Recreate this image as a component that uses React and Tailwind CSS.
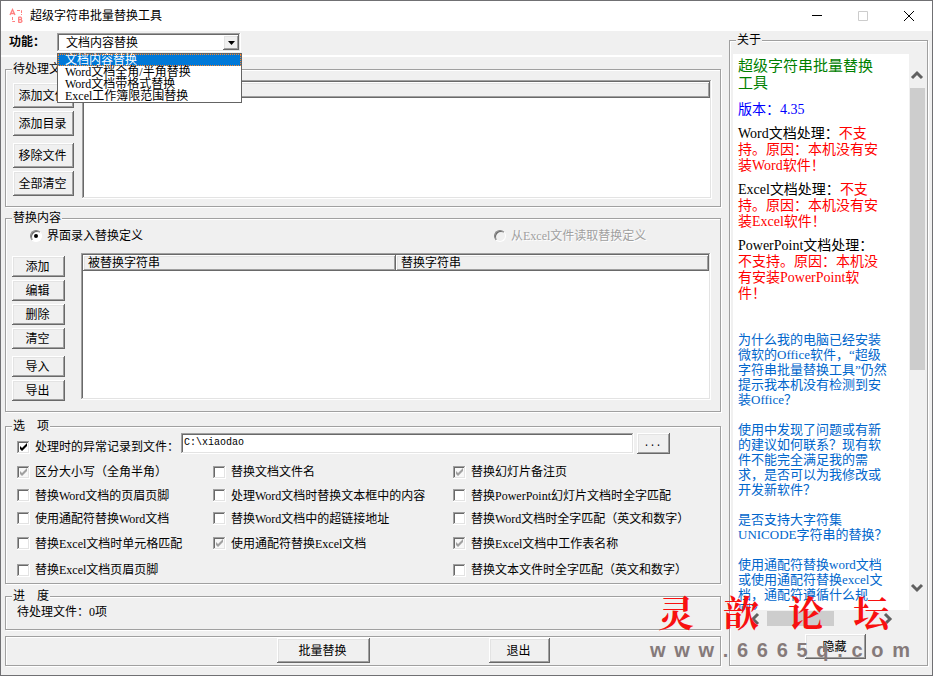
import { useState } from 'react'

const MODES = ['文档内容替换', 'Word文档全角/半角替换', 'Word文档带格式替换', 'Excel工作簿限范围替换']

const OPTIONS = [
  { id: 'case', text: '区分大小写（全角半角）', checked: true, disabled: true },
  { id: 'fileName', text: '替换文档文件名' },
  { id: 'notes', text: '替换幻灯片备注页', checked: true, disabled: true },
  { id: 'wordHeader', text: '替换Word文档的页眉页脚' },
  { id: 'wordBox', text: '处理Word文档时替换文本框中的内容' },
  { id: 'pptWhole', text: '替换PowerPoint幻灯片文档时全字匹配' },
  { id: 'wordWild', text: '使用通配符替换Word文档' },
  { id: 'wordLink', text: '替换Word文档中的超链接地址' },
  { id: 'wordWhole', text: '替换Word文档时全字匹配（英文和数字）' },
  { id: 'excelCell', text: '替换Excel文档时单元格匹配' },
  { id: 'excelWild', text: '使用通配符替换Excel文档', checked: true, disabled: true },
  { id: 'excelSheet', text: '替换Excel文档中工作表名称', checked: true, disabled: true },
  { id: 'excelHeader', text: '替换Excel文档页眉页脚' },
  null,
  { id: 'txtWhole', text: '替换文本文件时全字匹配（英文和数字）' },
]

const QUESTIONS = [
  ['为什么我的电脑已经安装', '微软的Office软件，“超级', '字符串批量替换工具”仍然', '提示我本机没有检测到安', '装Office？'],
  ['使用中发现了问题或有新', '的建议如何联系？现有软', '件不能完全满足我的需', '求，是否可以为我修改或', '开发新软件？'],
  ['是否支持大字符集', 'UNICODE字符串的替换？'],
  ['使用通配符替换word文档', '或使用通配符替换excel文', '档，通配符遵循什么规', '则？'],
]

const raised =
  'bg-[#f0f0f0] shadow-[inset_-1px_-1px_0_#696969,inset_1px_1px_0_#fff,inset_-2px_-2px_0_#a0a0a0,inset_2px_2px_0_#e3e3e3]'
const sunken =
  'bg-white shadow-[inset_-1px_-1px_0_#fff,inset_1px_1px_0_#a0a0a0,inset_-2px_-2px_0_#e3e3e3,inset_2px_2px_0_#696969]'
const etched = 'border border-[#a0a0a0] shadow-[1px_1px_0_#fff,inset_1px_1px_0_#fff]'

function Button({ className = '', children }) {
  return (
    <button type="button" className={`${raised} flex items-center justify-center pr-[2px] ${className}`}>
      {children}
    </button>
  )
}

function Group({ title, className = '', children }) {
  return (
    <fieldset className={`${etched} min-w-0 ${className}`}>
      <legend className="ml-[6px] h-[13px] bg-[#f0f0f0] px-px leading-[13px] whitespace-pre">{title}</legend>
      {children}
    </fieldset>
  )
}

function Check({ id, text, checked, disabled, onChange }) {
  return (
    <div className="flex items-center gap-[5px]">
      <span className="relative flex">
        <input
          id={id}
          type="checkbox"
          checked={checked}
          disabled={disabled}
          onChange={onChange}
          className={`${sunken} size-[13px] appearance-none disabled:bg-[#f7f7f7]`}
        />
        {checked && (
          <svg viewBox="0 0 13 13" className="pointer-events-none absolute inset-0 size-[13px]">
            <path d="M3 5v3l2 2 5-5V2L5 7z" fill={disabled ? '#a0a0a0' : '#000'} />
          </svg>
        )}
      </span>
      <label htmlFor={id} className="whitespace-nowrap">
        {text}
      </label>
    </div>
  )
}

function Radio({ id, text, checked, disabled, onChange }) {
  return (
    <div className="flex items-center gap-[5px]">
      <span className="relative flex">
        <input
          id={id}
          type="radio"
          name="source"
          checked={checked}
          disabled={disabled}
          onChange={onChange}
          className="size-[12px] appearance-none rounded-full border border-t-[#808080] border-r-white border-b-white border-l-[#808080] bg-white shadow-[inset_1px_1px_0_#696969] disabled:bg-[#f0f0f0]"
        />
        {checked && <span className="pointer-events-none absolute inset-1 rounded-full bg-black" />}
      </span>
      <label htmlFor={id} className={disabled ? 'text-[#a0a0a0] [text-shadow:1px_1px_0_#fff]' : ''}>
        {text}
      </label>
    </div>
  )
}

function Arrow({ d }) {
  return (
    <svg viewBox="0 0 16 16" className="size-4 shrink-0" fill="none" stroke="#606060" strokeWidth="3">
      <path d={d} />
    </svg>
  )
}

function Support({ name, children }) {
  return (
    <p className="mb-2 text-[14px] leading-4 text-[#ff0000]">
      <span className="text-black">{name}文档处理：</span>
      {children}
    </p>
  )
}

function TitleBar() {
  return (
    <header className="flex h-[30px] items-center bg-white pl-2">
      <svg viewBox="0 0 16 16" className="size-4" fill="none" stroke="#ff7f7f">
        <path d="M1 7 3.500 1.500 6 7M2 5.500h3" strokeWidth="1.300" />
        <path d="M8 2.500h4.500V7M3.500 9v4.500H7" strokeDasharray="3 1" />
        <path d="M9.700 9v5.500M9.500 9.200h2.300q1.500 1.200 0 2.500H9.500M12 11.700q2 1.300 0 2.600H9.500" strokeWidth="1.300" />
      </svg>
      <h1 className="ml-[5px] flex-1">超级字符串批量替换工具</h1>
      <button type="button" aria-label="最小化" className="flex w-[46px] justify-center">
        <svg viewBox="0 0 10 10" className="size-[10px]" stroke="#000">
          <path d="M0 4.500h10" />
        </svg>
      </button>
      <button type="button" aria-label="最大化" disabled className="flex w-[46px] justify-center">
        <svg viewBox="0 0 10 10" className="size-[10px]" fill="none" stroke="#ccc">
          <path d="M.5.500h9v9h-9z" />
        </svg>
      </button>
      <button type="button" aria-label="关闭" className="flex w-[46px] justify-center">
        <svg viewBox="0 0 10 10" className="size-[10px]" stroke="#000">
          <path d="M0 0l10 10M10 0 0 10" />
        </svg>
      </button>
    </header>
  )
}

function ModePicker() {
  const [mode, setMode] = useState(0)
  return (
    <div className="flex h-[26px] items-start border-b-2 border-white pt-[2px] pl-2">
      <label htmlFor="mode" className="w-12 leading-[19px] font-bold">
        功能：
      </label>
      <div className="relative">
        <select
          id="mode"
          value={mode}
          onChange={(e) => setMode(Number(e.target.value))}
          className={`${sunken} block h-[19px] w-[184px] appearance-none pl-[9px]`}
        >
          {MODES.map((m, i) => (
            <option key={m} value={i}>
              {m}
            </option>
          ))}
        </select>
        <span className={`${raised} pointer-events-none absolute top-[2px] right-[2px] flex h-[15px] w-4 items-center justify-center`}>
          <svg viewBox="0 0 7 4" className="h-1 w-[7px]">
            <path d="M0 0h7L3.500 4z" />
          </svg>
        </span>
        <ul className="absolute top-5 left-0 z-10 w-[185px] border border-[#646464] bg-white">
          {MODES.map((m, i) => (
            <li
              key={m}
              onClick={() => setMode(i)}
              className={`h-3 pl-[7px] leading-[13px] whitespace-nowrap ${
                i === mode ? 'bg-[#0078d7] text-white outline-1 -outline-offset-1 outline-[#ff8728] outline-dotted' : ''
              }`}
            >
              {m}
            </li>
          ))}
        </ul>
      </div>
    </div>
  )
}

function FileGroup() {
  return (
    <Group title="待处理文件" className="h-[144px]">
      <div className="flex gap-2 pr-[8px] pl-[7px]">
        <div className="flex flex-col gap-[3px] pt-[7px]">
          <Button className="h-[25px] w-[61px]">添加文件</Button>
          <Button className="h-[25px] w-[61px]">添加目录</Button>
          <Button className="mt-1 h-[25px] w-[61px]">移除文件</Button>
          <Button className="h-[25px] w-[61px]">全部清空</Button>
        </div>
        <div className={`${sunken} mt-1 h-[119px] flex-1 p-[2px]`}>
          <table className="w-full">
            <thead>
              <tr>
                <th className={`${raised} h-4`} />
              </tr>
            </thead>
          </table>
        </div>
      </div>
    </Group>
  )
}

function ReplaceGroup() {
  const [source, setSource] = useState('ui')
  return (
    <Group title="替换内容" className="mt-[5px] h-[200px]">
      <div className="grid h-[22px] grid-cols-[464px_1fr] pl-6">
        <Radio id="fromUi" text="界面录入替换定义" checked={source === 'ui'} onChange={() => setSource('ui')} />
        <Radio id="fromExcel" text="从Excel文件读取替换定义" checked={source === 'excel'} disabled onChange={() => setSource('excel')} />
      </div>
      <div className="mt-[6px] flex gap-4 pr-[9px] pl-[6px]">
        <div className="flex flex-col gap-[3px] pt-[3px]">
          <Button className="h-[21px] w-[53px]">添加</Button>
          <Button className="h-[21px] w-[53px]">编辑</Button>
          <Button className="h-[21px] w-[53px]">删除</Button>
          <Button className="h-[21px] w-[53px]">清空</Button>
          <Button className="mt-1 h-[21px] w-[53px]">导入</Button>
          <Button className="h-[21px] w-[53px]">导出</Button>
        </div>
        <div className={`${sunken} h-[147px] flex-1 p-[2px]`}>
          <table className="w-full table-fixed leading-4">
            <thead>
              <tr>
                <th className={`${raised} h-4 pl-[5px] text-left font-normal`}>被替换字符串</th>
                <th className={`${raised} h-4 pl-[5px] text-left font-normal`}>替换字符串</th>
              </tr>
            </thead>
          </table>
        </div>
      </div>
    </Group>
  )
}

function OptionGroup() {
  const [log, setLog] = useState(true)
  const [path, setPath] = useState('C:\\xiaodao')
  const [values, setValues] = useState(() =>
    Object.fromEntries(OPTIONS.filter(Boolean).map((o) => [o.id, Boolean(o.checked)]))
  )
  return (
    <Group title="选　项" className="mt-2 h-[164px]">
      <div className="flex h-[27px] items-start pl-[11px]">
        <div className="w-[164px] pt-[6px]">
          <Check id="log" text="处理时的异常记录到文件：" checked={log} onChange={() => setLog(!log)} />
        </div>
        <input
          aria-label="异常记录文件"
          value={path}
          onChange={(e) => setPath(e.target.value)}
          className={`${sunken} h-[21px] min-w-0 flex-1 px-[3px] pb-[3px] font-['Liberation_Mono',monospace] text-[10px]`}
        />
        <Button className="mr-[50px] ml-[3px] h-[21px] w-[33px] font-['Liberation_Mono',monospace] text-[10px]">...</Button>
      </div>
      <div className="grid grid-cols-[196px_240px_1fr] grid-rows-[24px_23px_23px_27px_26px] pl-[11px]">
        {OPTIONS.map((o, i) =>
          o ? (
            <Check
              key={o.id}
              {...o}
              checked={values[o.id]}
              onChange={() => setValues((v) => ({ ...v, [o.id]: !v[o.id] }))}
            />
          ) : (
            <span key={i} />
          )
        )}
      </div>
    </Group>
  )
}

function About() {
  return (
    <Group title="关于" className="mt-[3px] mr-1 ml-[7px] h-[632px] w-[199px] shrink-0">
      <div className="mt-[7px] flex pr-[2px] pl-[3px]">
        <div className="h-[556px] flex-1 overflow-hidden bg-white pt-1 pl-[5px] whitespace-nowrap">
          <h2 className="mb-[10px] text-[15px] leading-[17px] text-[#008000]">
            超级字符串批量替换
            <br />
            工具
          </h2>
          <p className="mb-2 text-[14px] leading-4 text-[#0000ff]">版本：4.35</p>
          <Support name="Word">
            不支
            <br />
            持。原因：本机没有安
            <br />
            装Word软件！
          </Support>
          <Support name="Excel">
            不支
            <br />
            持。原因：本机没有安
            <br />
            装Excel软件！
          </Support>
          <Support name="PowerPoint">
            <br />
            不支持。原因：本机没
            <br />
            有安装PowerPoint软
            <br />
            件！
          </Support>
          <ul className="mt-[30px] space-y-[15px] text-[13px] leading-[15px]">
            {QUESTIONS.map((lines) => (
              <li key={lines[0]}>
                <a href="#faq" className="text-[#0066cc]">
                  {lines.map((line) => (
                    <span key={line} className="block">
                      {line}
                    </span>
                  ))}
                </a>
              </li>
            ))}
          </ul>
        </div>
        <div className="flex w-4 flex-col items-center pt-[13px] pb-[14px]">
          <Arrow d="M3 11l5-5 5 5" />
          <div className="mt-[5px] h-[282px] w-[15px] bg-[#cdcdcd]" />
          <div className="flex-1" />
          <Arrow d="M3 5l5 5 5-5" />
        </div>
      </div>
      <div className="flex h-[17px] items-center pr-[31px] pl-[17px]">
        <Arrow d="M11 3L6 8l5 5" />
        <div className="ml-1 h-[15px] w-[67px] bg-[#cdcdcd]" />
        <div className="flex-1" />
        <Arrow d="M5 3l5 5-5 5" />
      </div>
      <Button className="mt-[7px] ml-[75px] h-[25px] w-[61px]">隐藏</Button>
    </Group>
  )
}

function Watermark() {
  return (
    <div className="pointer-events-none absolute right-[22px] bottom-[11px] w-[260px]">
      <div className="ml-2 flex w-[231px] justify-between font-['Noto_Serif_CJK_SC','Noto_Sans_CJK_SC',serif] text-[36px] leading-[48px] font-bold text-[#f81010]">
        {[...'灵歆论坛'].map((c) => (
          <span key={c}>{c}</span>
        ))}
      </div>
      <div className="flex justify-between font-['Liberation_Sans_Narrow','Liberation_Sans',sans-serif] text-[20px] leading-[28px] font-bold text-[#857a7a]">
        {[...'www.6665q.com'].map((c, i) => (
          <span key={i}>{c}</span>
        ))}
      </div>
    </div>
  )
}

export default function App() {
  return (
    <div className="relative min-h-screen border border-[#707073] bg-[#f0f0f0] font-['Liberation_Serif','Noto_Sans_CJK_SC',serif] text-[12px] leading-4 text-black">
      <TitleBar />
      <div className="flex">
        <main className="min-w-0 flex-1">
          <ModePicker />
          <div className="pt-[6px] pr-px pl-1">
            <FileGroup />
            <ReplaceGroup />
            <OptionGroup />
            <Group title="进　度" className="mt-[6px] h-10">
              <p className="pt-px pl-[11px]">待处理文件：0项</p>
            </Group>
            <div className={`${etched} mt-[6px] flex h-[30px] gap-[119px] pt-px pl-[271px]`}>
              <Button className="h-[25px] w-[93px]">批量替换</Button>
              <Button className="h-[25px] w-[61px]">退出</Button>
            </div>
          </div>
        </main>
        <About />
      </div>
      <Watermark />
    </div>
  )
}
